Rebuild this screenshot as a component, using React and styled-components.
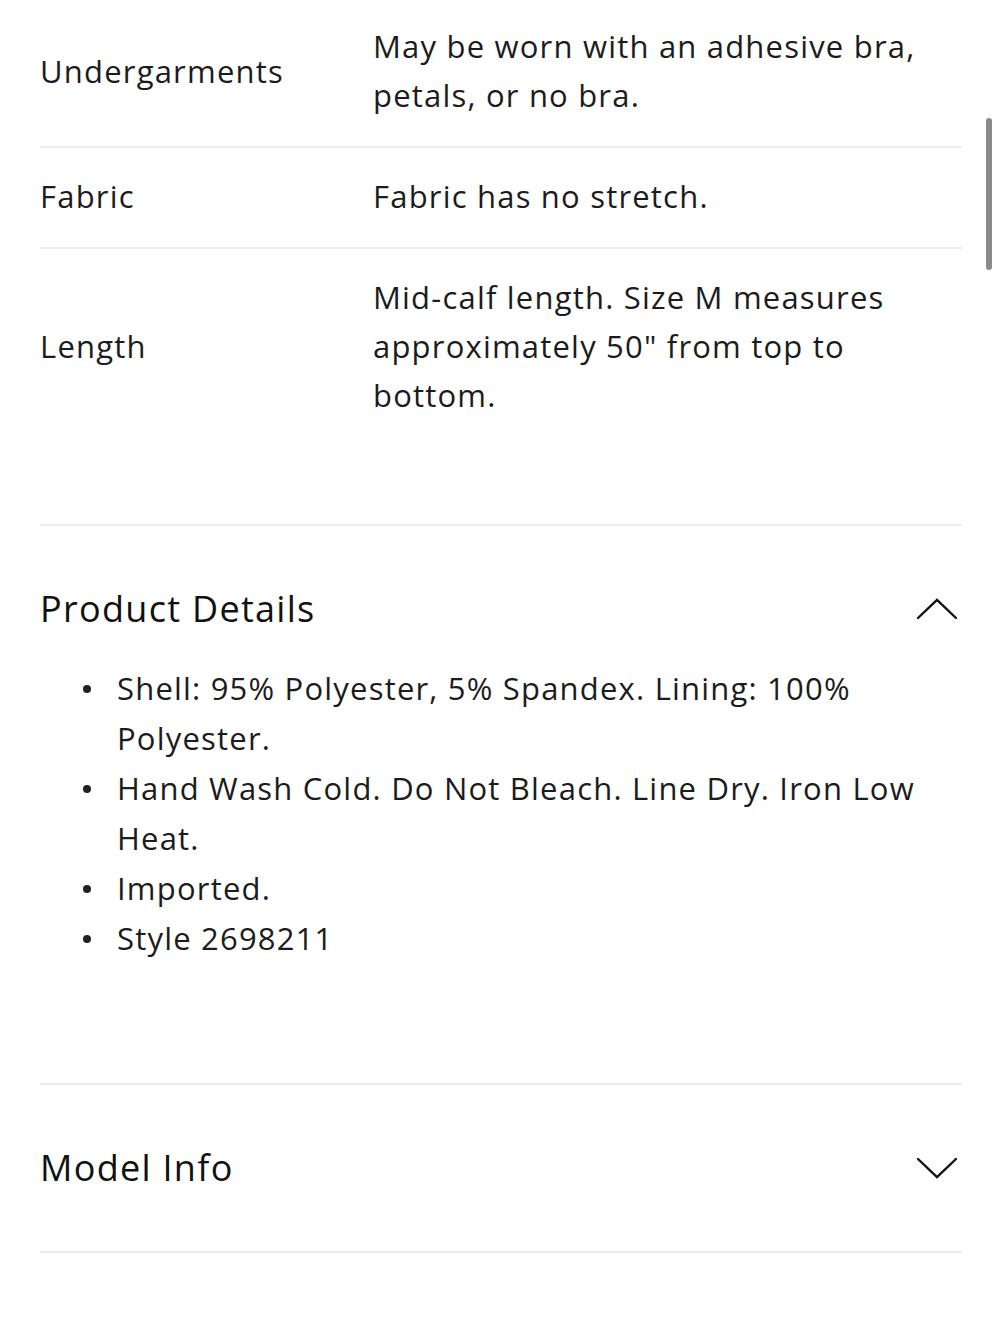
import React from "react";
import styled, { createGlobalStyle } from "styled-components";

const Global = createGlobalStyle`
  html, body { margin: 0; padding: 0; background: #fff; }
  body { font-family: "Open Sans", "Noto Sans", sans-serif; color: #222; }
`;

const Page = styled.div`
  width: 1000px;
  min-height: 1333px;
  box-sizing: border-box;
  padding: 0 38px 0 40px;
`;

const Table = styled.div`
  display: flex;
  flex-direction: column;
  padding-bottom: 78px;
  border-bottom: 2px solid #ececec;
`;

const Row = styled.div`
  display: grid;
  grid-template-columns: 333px 1fr;
  align-items: center;
  padding: ${(p) => (p.$first ? "22px 0 26px" : "24px 0 26px")};
  border-bottom: ${(p) => (p.$last ? "none" : "2px solid #ececec")};
  font-size: 31px;
  letter-spacing: 1.2px;
  line-height: 49px;
`;

const Label = styled.div`
  color: #1c1c1c;
`;

const Value = styled.div`
  color: #1c1c1c;
  padding-right: 22px;
`;

const Section = styled.section`
  border-bottom: 2px solid #ececec;
  padding-bottom: ${(p) => p.$pb}px;
`;

const Header = styled.div`
  display: flex;
  align-items: center;
  justify-content: space-between;
  padding-top: 64px;
  padding-right: 4px;
`;

const Title = styled.h2`
  margin: 0;
  font-size: 36px;
  letter-spacing: 1.3px;
  line-height: 38px;
  font-weight: 400;
  color: #111;
`;

const List = styled.ul`
  list-style: none;
  margin: 35px 0 0;
  padding: 0 20px 0 0;
`;

const Item = styled.li`
  display: flex;
  font-size: 31px;
  letter-spacing: 1.2px;
  line-height: 50px;
  color: #1c1c1c;
`;

const Dot = styled.span`
  flex: 0 0 77px;
  display: flex;
  justify-content: flex-start;
  padding-left: 43px;
  box-sizing: border-box;
  &::before {
    content: "";
    width: 8px;
    height: 8px;
    border-radius: 50%;
    background: #222;
    margin-top: 22px;
  }
`;

const ScrollThumb = styled.div`
  position: fixed;
  top: 118px;
  left: 986px;
  width: 6px;
  height: 152px;
  border-radius: 3px;
  background: #8a8a8a;
`;

const Chevron = ({ up }) => (
  <svg width="42" height="22" viewBox="0 0 42 22" fill="none">
    <path
      d={up ? "M2 20 L21 2 L40 20" : "M2 2 L21 20 L40 2"}
      stroke="#111"
      strokeWidth="2.4"
      strokeLinecap="round"
      strokeLinejoin="miter"
    />
  </svg>
);

const rows = [
  ["Undergarments", "May be worn with an adhesive bra, petals, or no bra."],
  ["Fabric", "Fabric has no stretch."],
  ["Length", 'Mid-calf length. Size M measures approximately 50" from top to bottom.'],
];

const details = [
  "Shell: 95% Polyester, 5% Spandex. Lining: 100% Polyester.",
  "Hand Wash Cold. Do Not Bleach. Line Dry. Iron Low Heat.",
  "Imported.",
  "Style 2698211",
];

export default function App() {
  return (
    <>
      <Global />
      <Page>
        <Table>
          {rows.map(([l, v], i) => (
            <Row key={l} $first={i === 0} $last={i === rows.length - 1}>
              <Label>{l}</Label>
              <Value>{v}</Value>
            </Row>
          ))}
        </Table>
        <Section $pb={120}>
          <Header>
            <Title>Product Details</Title>
            <Chevron up />
          </Header>
          <List>
            {details.map((d) => (
              <Item key={d}>
                <Dot />
                <span>{d}</span>
              </Item>
            ))}
          </List>
        </Section>
        <Section $pb={64}>
          <Header>
            <Title>Model Info</Title>
            <Chevron />
          </Header>
        </Section>
      </Page>
      <ScrollThumb />
    </>
  );
}
